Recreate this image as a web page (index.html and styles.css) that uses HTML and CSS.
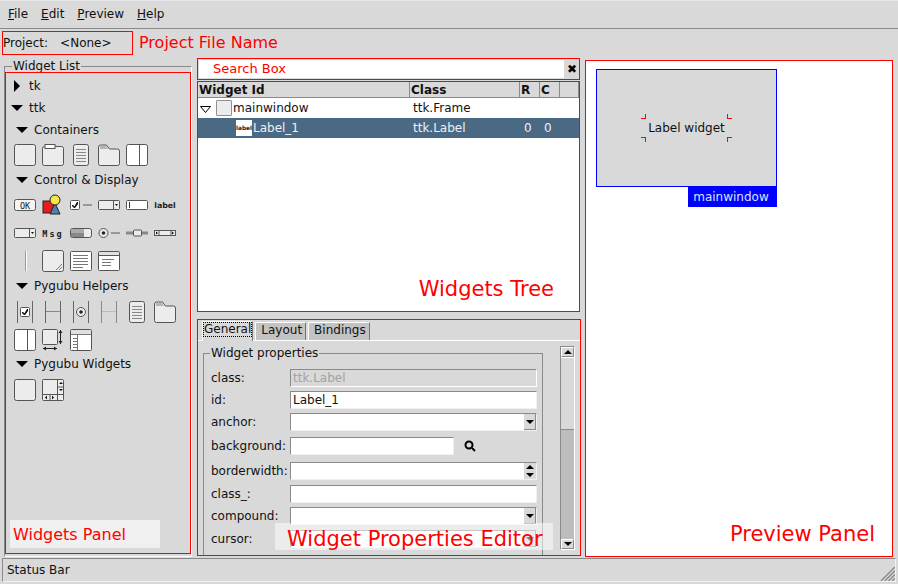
FILE: index.html
```html
<!DOCTYPE html>
<html lang="en">
<head>
    <meta charset="UTF-8">
    <meta name="viewport" content="width=device-width, initial-scale=1.0">
    <title>Pygubu Designer</title>
    <link rel="stylesheet" href="styles.css">
</head>
<body>
    <svg class="sprites" width="0" height="0">
        <symbol id="i-frame" viewBox="0 0 22 22"><rect x=".5" y=".5" width="21" height="21" rx="2" fill="#ececec" stroke="#555"/></symbol>
        <symbol id="i-labelframe" viewBox="0 0 22 22"><rect x=".5" y="2.500" width="21" height="19" rx="2" fill="#ececec" stroke="#555"/><rect x="3" y=".5" width="10" height="4" fill="#fff" stroke="#555"/></symbol>
        <symbol id="i-text" viewBox="0 0 22 22"><rect x="3.500" y=".5" width="15" height="21" rx="2" fill="#ececec" stroke="#555"/><path d="M6 5.500h10M6 8.500h10M6 11.500h10M6 14.500h10M6 17.500h10" stroke="#888"/></symbol>
        <symbol id="i-notebook" viewBox="0 0 22 22"><path d="M.5 3a2 2 0 0 1 2-2h6l3 4h8a2 2 0 0 1 2 2v12.500a2 2 0 0 1-2 2h-17a2 2 0 0 1-2-2z" fill="#ececec" stroke="#555"/><path d="M2 2h6l2 3H2z" fill="#b5b5b5"/></symbol>
        <symbol id="i-paned" viewBox="0 0 22 22"><rect x=".5" y=".5" width="21" height="21" rx="2" fill="#fff" stroke="#555"/><path d="M13.500 1v20" stroke="#555"/></symbol>
        <symbol id="i-image" viewBox="0 0 22 22"><rect x="1" y="7" width="12" height="12" fill="#e81c1c" stroke="#222"/><path d="M8 20l5-11 5 11z" fill="#4f7fae" stroke="#222"/><circle cx="13" cy="6" r="5" fill="#f5e64a" stroke="#222"/></symbol>
        <symbol id="i-check" viewBox="0 0 22 22"><rect x=".5" y="6.500" width="9" height="9" rx="1" fill="#fff" stroke="#555"/><path d="M2.500 11l2 2 3-5v2l-3 4-2-2z" fill="#111" stroke="#111"/><path d="M13 11h9" stroke="#999" stroke-width="2"/></symbol>
        <symbol id="i-combo" viewBox="0 0 22 22"><rect x=".5" y="6.500" width="21" height="9" rx="1" fill="#ececec" stroke="#555"/><path d="M15.500 7v8" stroke="#555"/><path d="M17 10h3l-1.500 2z" fill="#111"/></symbol>
        <symbol id="i-entry" viewBox="0 0 22 22"><rect x=".5" y="6.500" width="21" height="9" rx="1" fill="#fff" stroke="#555"/><path d="M3.500 8v6" stroke="#333"/></symbol>
        <symbol id="i-progress" viewBox="0 0 22 22"><rect x=".5" y="6.500" width="21" height="9" rx="2" fill="#ececec" stroke="#555"/><rect x="1" y="7" width="13" height="4" fill="#aaa"/><rect x="1" y="11" width="13" height="4" fill="#888"/></symbol>
        <symbol id="i-radio" viewBox="0 0 22 22"><circle cx="5.500" cy="11" r="4.500" fill="#ececec" stroke="#555"/><circle cx="5.500" cy="11" r="1.800" fill="#222"/><path d="M13 11h9" stroke="#999" stroke-width="2"/></symbol>
        <symbol id="i-scale" viewBox="0 0 22 22"><path d="M0 11h22" stroke="#888" stroke-width="3"/><rect x="7.500" y="8" width="8" height="6" rx="1" fill="#ececec" stroke="#555"/></symbol>
        <symbol id="i-scroll" viewBox="0 0 22 22"><rect x=".5" y="8.500" width="21" height="5" fill="#ececec" stroke="#555"/><path d="M5 9v4M17 9v4" stroke="#555"/><path d="M4 11l-2-1.500v3zM18 9.500v3l2-1.500z" fill="#111"/></symbol>
        <symbol id="i-sep" viewBox="0 0 22 22"><path d="M11.500 1v20" stroke="#999"/><path d="M12.500 1v20" stroke="#fff"/></symbol>
        <symbol id="i-grip" viewBox="0 0 22 22"><rect x=".5" y=".5" width="21" height="21" rx="2" fill="#ececec" stroke="#555"/><path d="M14 20l6-6M17 20l3-3" stroke="#777"/></symbol>
        <symbol id="i-textbox" viewBox="0 0 22 22"><rect x=".5" y="1.500" width="21" height="19" rx="1" fill="#fff" stroke="#555"/><path d="M3 5.500h15M3 8.500h15M3 11.500h15M3 14.500h15M3 17.500h10" stroke="#777"/></symbol>
        <symbol id="i-tree" viewBox="0 0 22 22"><rect x=".5" y="1.500" width="21" height="19" rx="1" fill="#fff" stroke="#555"/><rect x="1" y="2" width="20" height="3" fill="#e0e0e0"/><path d="M1 5.500h20" stroke="#555"/><path d="M4 9.500h12M4 12.500h9M4 15.500h9" stroke="#777"/></symbol>
        <symbol id="i-hcheck" viewBox="0 0 22 22"><path d="M3.500 0v22M18.500 0v22" stroke="#666"/><rect x="6.500" y="6.500" width="9" height="9" rx="1" fill="#fff" stroke="#555"/><path d="M8.500 11l2 2 3-5v2l-3 4-2-2z" fill="#111" stroke="#111"/></symbol>
        <symbol id="i-hline" viewBox="0 0 22 22"><path d="M3.500 0v22M18.500 0v22" stroke="#666"/><path d="M4 10.500h14" stroke="#888"/></symbol>
        <symbol id="i-hradio" viewBox="0 0 22 22"><path d="M3.500 0v22M18.500 0v22" stroke="#666"/><circle cx="11" cy="11" r="4.500" fill="#ececec" stroke="#555"/><circle cx="11" cy="11" r="1.800" fill="#222"/></symbol>
        <symbol id="i-hlight" viewBox="0 0 22 22"><path d="M3.500 0v22M18.500 0v22" stroke="#888"/><path d="M4 10.500h14" stroke="#bbb"/></symbol>
        <symbol id="i-scrolled" viewBox="0 0 22 22"><rect x=".5" y=".5" width="15" height="15" rx="1" fill="#ececec" stroke="#555"/><path d="M18.500 1v14" stroke="#222"/><path d="M18.500 1l-2 3h4zM18.500 15l-2-3h4z" fill="#222"/><path d="M1 19.500h14" stroke="#222"/><path d="M1 19.500l3-2v4zM15 19.500l-3-2v4z" fill="#222"/></symbol>
        <symbol id="i-stree" viewBox="0 0 22 22"><rect x=".5" y=".5" width="21" height="21" rx="1" fill="#fff" stroke="#555"/><rect x="1" y="1" width="20" height="4" fill="#e0e0e0"/><path d="M1 5.500h20M7 9.500H3M7 12.500H3M7 15.500H3M7 18.500H3" stroke="#777"/><path d="M7.500 6v15" stroke="#777"/></symbol>
        <symbol id="i-sframe" viewBox="0 0 22 22"><rect x=".5" y=".5" width="21" height="21" rx="1" fill="#ececec" stroke="#555"/><path d="M15.500 1v20M1 15.500h20" stroke="#555"/><path d="M19 3l-2 2h4zM19 12l-2-2h4zM3 18.500l2-2v4zM12 18.500l-2-2v4z" fill="#111"/><path d="M15.500 8h6M8 15.500v6" stroke="#555"/></symbol>
    </svg>

    <div class="app">
        <nav class="menubar">
            <span><u>F</u>ile</span>
            <span><u>E</u>dit</span>
            <span><u>P</u>review</span>
            <span><u>H</u>elp</span>
        </nav>

        <div class="projectbar">
            <div class="project-box"><span>Project:</span><span>&lt;None&gt;</span></div>
            <span class="tag project-tag">Project File Name</span>
        </div>

        <main class="main">
            <fieldset class="widget-list">
                <legend>Widget List</legend>
                <div class="widgets-panel">
                    <div class="group-head head-top"><i class="tri-right"></i>tk</div>
                    <div class="group-head head-top"><i class="tri-down"></i>ttk</div>

                    <div class="group-head"><i class="tri-down"></i>Containers</div>
                    <div class="icon-grid">
                        <svg class="icon"><use href="#i-frame"/></svg>
                        <svg class="icon"><use href="#i-labelframe"/></svg>
                        <svg class="icon"><use href="#i-text"/></svg>
                        <svg class="icon"><use href="#i-notebook"/></svg>
                        <svg class="icon"><use href="#i-paned"/></svg>
                    </div>

                    <div class="group-head"><i class="tri-down"></i>Control &amp; Display</div>
                    <div class="icon-grid">
                        <svg class="icon" viewBox="0 0 22 22"><rect x=".5" y="5.500" width="21" height="11" rx="2" fill="#f4f4f4" stroke="#555"/><text x="11" y="14.500" class="tiny-text" text-anchor="middle">OK</text></svg>
                        <svg class="icon"><use href="#i-image"/></svg>
                        <svg class="icon"><use href="#i-check"/></svg>
                        <svg class="icon"><use href="#i-combo"/></svg>
                        <svg class="icon"><use href="#i-entry"/></svg>
                        <svg class="icon" viewBox="0 0 22 22"><text x="11" y="14" class="tiny-text sans" text-anchor="middle">label</text></svg>
                        <svg class="icon"><use href="#i-combo"/></svg>
                        <svg class="icon" viewBox="0 0 22 22"><text x="11" y="14.500" class="tiny-text bold wide" text-anchor="middle">Msg</text></svg>
                        <svg class="icon"><use href="#i-progress"/></svg>
                        <svg class="icon"><use href="#i-radio"/></svg>
                        <svg class="icon"><use href="#i-scale"/></svg>
                        <svg class="icon"><use href="#i-scroll"/></svg>
                        <svg class="icon"><use href="#i-sep"/></svg>
                        <svg class="icon"><use href="#i-grip"/></svg>
                        <svg class="icon"><use href="#i-textbox"/></svg>
                        <svg class="icon"><use href="#i-tree"/></svg>
                    </div>

                    <div class="group-head"><i class="tri-down"></i>Pygubu Helpers</div>
                    <div class="icon-grid grid-low">
                        <svg class="icon"><use href="#i-hcheck"/></svg>
                        <svg class="icon"><use href="#i-hline"/></svg>
                        <svg class="icon"><use href="#i-hradio"/></svg>
                        <svg class="icon"><use href="#i-hlight"/></svg>
                        <svg class="icon"><use href="#i-text"/></svg>
                        <svg class="icon"><use href="#i-notebook"/></svg>
                        <svg class="icon"><use href="#i-paned"/></svg>
                        <svg class="icon"><use href="#i-scrolled"/></svg>
                        <svg class="icon"><use href="#i-stree"/></svg>
                    </div>

                    <div class="group-head"><i class="tri-down"></i>Pygubu Widgets</div>
                    <div class="icon-grid grid-low">
                        <svg class="icon"><use href="#i-frame"/></svg>
                        <svg class="icon"><use href="#i-sframe"/></svg>
                    </div>

                    <span class="tag tag-box panel-tag">Widgets Panel</span>
                </div>
            </fieldset>

            <section class="middle">
                <div class="search-panel">
                    <div class="search-entry">Search Box</div>
                    <span class="search-clear">✖</span>
                </div>

                <div class="tree-panel">
                    <div class="tree-head">
                        <span>Widget Id</span>
                        <span>Class</span>
                        <span>R</span>
                        <span>C</span>
                        <span></span>
                    </div>
                    <div class="tree-row">
                        <span class="tree-name"><svg class="tree-open" viewBox="0 0 11 7"><path d="M.5.5h10l-5 6z" fill="#fff" stroke="#000"/></svg><svg class="row-icon"><use href="#i-frame"/></svg>mainwindow</span>
                        <span class="tree-class">ttk.Frame</span>
                        <span></span>
                        <span></span>
                    </div>
                    <div class="tree-row selected">
                        <span class="tree-name child"><b class="label-chip">label</b>Label_1</span>
                        <span class="tree-class">ttk.Label</span>
                        <span class="tree-num">0</span>
                        <span class="tree-num">0</span>
                    </div>
                    <span class="tag tree-tag">Widgets Tree</span>
                </div>

                <div class="props-panel">
                    <div class="tabs">
                        <div class="tab active"><span class="tab-focus">General</span></div>
                        <div class="tab">Layout</div>
                        <div class="tab">Bindings</div>
                    </div>
                    <div class="tab-body">
                        <fieldset class="prop-frame">
                            <legend>Widget properties</legend>
                            <div class="prop-row"><label>class:</label><div class="field readonly">ttk.Label</div></div>
                            <div class="prop-row"><label>id:</label><div class="field">Label_1</div></div>
                            <div class="prop-row"><label>anchor:</label><div class="field"><i class="field-btn"><i class="tri-small"></i></i></div></div>
                            <div class="prop-row gap-2"><label>background:</label><div class="field field-short"></div>
                                <svg class="search-icon" viewBox="0 0 12 12"><circle cx="5" cy="5" r="3.500" fill="none" stroke="#000" stroke-width="2"/><path d="M8 8l3 3" stroke="#000" stroke-width="2"/></svg>
                            </div>
                            <div class="prop-row gap-3"><label>borderwidth:</label><div class="field"><i class="spin-btn"><i class="tri-small up"></i><i class="tri-small"></i></i></div></div>
                            <div class="prop-row gap-1"><label>class_:</label><div class="field"></div></div>
                            <div class="prop-row"><label>compound:</label><div class="field"><i class="field-btn"><i class="tri-small"></i></i></div></div>
                            <div class="prop-row gap-1"><label>cursor:</label><div class="field"><i class="field-btn"><i class="tri-small"></i></i></div></div>
                        </fieldset>
                        <div class="scrollbar">
                            <div class="scroll-btn"><i class="tri-small up"></i></div>
                            <div class="scroll-thumb"></div>
                            <div class="scroll-trough"></div>
                            <div class="scroll-btn"><i class="tri-small"></i></div>
                        </div>
                    </div>
                    <span class="tag tag-box props-tag">Widget Properties Editor</span>
                </div>
            </section>

            <section class="preview-panel">
                <div class="preview-window">
                    <div class="preview-canvas">
                        <span class="preview-label">Label widget
                            <i class="handle tl"></i><i class="handle tr"></i><i class="handle bl"></i><i class="handle br"></i>
                        </span>
                    </div>
                    <div class="preview-name">mainwindow</div>
                </div>
                <span class="tag preview-tag">Preview Panel</span>
            </section>
        </main>

        <footer class="statusbar">
            <span>Status Bar</span>
            <svg class="resize-grip" viewBox="0 0 16 16"><path d="M1 16L16 1M5 16L16 5M9 16l7-7M13 16l3-3" stroke="#8a8a8a" stroke-width="1.500"/></svg>
        </footer>
    </div>
</body>
</html>
```

FILE: styles.css
```css
* {
    box-sizing: border-box;
}

html, body {
    margin: 0;
    height: 100%;
    overflow: hidden;
}

body {
    font-family: "DejaVu Sans", sans-serif;
    font-size: 12px;
    color: #111;
    background: #d9d9d9;
}

.sprites {
    position: absolute;
}

.tiny-text {
    font-family: "DejaVu Sans Mono", monospace;
    font-size: 8.5px;
    fill: #222;
}

.tiny-text.bold {
    font-weight: bold;
}

.tiny-text.wide {
    letter-spacing: 2px;
}

.tiny-text.sans {
    font-family: "DejaVu Sans", sans-serif;
    font-size: 7.8px;
    font-weight: bold;
}

.app {
    display: flex;
    flex-direction: column;
    height: 584px;
}

.menubar {
    display: flex;
    gap: 13px;
    align-items: center;
    height: 29px;
    padding: 0 8px 1px;
    border-top: 1px solid #e6e6e6;
    border-bottom: 1px solid #8a8a8a;
}

.projectbar {
    display: flex;
    align-items: center;
    height: 27px;
    padding: 1px 0 0 2px;
}

.project-box {
    display: flex;
    gap: 12px;
    align-items: center;
    width: 131px;
    height: 24px;
    border: 1px solid #f00;
}

.tag {
    position: absolute;
    color: #f00;
    font-size: 20px;
    line-height: 24px;
    white-space: nowrap;
}

.project-tag {
    position: static;
    margin-left: 6px;
    font-size: 16px;
}

.tag-box {
    background: rgba(255, 255, 255, 0.6);
}

.main {
    display: flex;
    flex: 1;
    min-height: 0;
    padding-left: 4px;
}

/* widget list */
.widget-list {
    width: 188px;
    height: 497px;
    margin: 4px 0 0;
    padding: 0;
    border: 1px solid #fff;
    border-top-color: #8a8a8a;
    border-left-color: #8a8a8a;
}

.widget-list legend {
    margin-left: 7px;
    padding: 0 1px;
    line-height: 12px;
}

.widgets-panel {
    position: relative;
    width: 186px;
    height: 482px;
    padding-top: 2px;
    border: 1px solid #f00;
}

.group-head {
    display: flex;
    align-items: center;
    gap: 6px;
    height: 22px;
    padding-left: 10px;
}

.head-top {
    padding-left: 5px;
}

.tri-right, .tri-down, .tri-small {
    display: block;
    width: 0;
    height: 0;
    border-style: solid;
    border-color: transparent;
}

.tri-right {
    margin: 0 3px;
    border-width: 6px 0 6px 6px;
    border-left-color: #000;
}

.tri-down {
    border-width: 6px 6px 0;
    border-top-color: #000;
}

.tri-small {
    border-width: 4px 4px 0;
    border-top-color: #000;
}

.tri-small.up {
    border-width: 0 4px 4px;
    border-bottom-color: #000;
}

.icon-grid {
    display: grid;
    grid-template-columns: repeat(6, 22px);
    gap: 6px;
    margin: 3px 0;
    padding-left: 8px;
}

.grid-low {
    margin: 4px 0 2px;
}

.icon {
    display: block;
    width: 22px;
    height: 22px;
}

.panel-tag {
    left: 4px;
    top: 447px;
    width: 150px;
    height: 28px;
    padding-left: 3px;
    font-size: 16px;
    line-height: 30px;
}

/* middle column */
.middle {
    display: flex;
    flex-direction: column;
    width: 383px;
    margin-left: 5px;
    padding-top: 2px;
}

.search-panel {
    display: flex;
    align-items: center;
    height: 22px;
    margin-bottom: 1px;
    border: 1px solid #f00;
}

.search-entry {
    width: 367px;
    height: 18px;
    margin-left: 1px;
    padding-left: 14px;
    background: #fff;
    color: #f00;
    font-size: 13px;
    line-height: 18px;
}

.search-clear {
    width: 14px;
    margin-left: 1px;
    color: #000;
    font-size: 12px;
    text-align: center;
}

.tree-panel {
    position: relative;
    height: 231px;
    margin-bottom: 7px;
    background: #fff;
    border: 1px solid #f00;
}

.tree-head, .tree-row {
    display: grid;
    grid-template-columns: 212px 110px 20px 20px 1fr;
}

.tree-head {
    height: 16px;
    background: #d9d9d9;
    font-weight: bold;
    line-height: 16px;
}

.tree-head span {
    padding-left: 1px;
    border-right: 1px solid #8a8a8a;
    border-bottom: 1px solid #8a8a8a;
    white-space: nowrap;
    overflow: hidden;
}

.tree-row {
    height: 20px;
    padding-bottom: 1px;
    align-items: center;
}

.tree-name {
    display: flex;
    align-items: center;
}

.tree-open {
    width: 11px;
    height: 7px;
    margin: 3px 5px 0 2px;
}

.row-icon {
    width: 16px;
    height: 16px;
    margin-right: 1px;
}

.tree-class {
    padding-left: 3px;
}

.tree-num {
    padding-left: 4px;
}

.selected {
    background: #4a6984;
    color: #eef2f5;
}

.child {
    padding-left: 38px;
}

.label-chip {
    width: 16px;
    height: 16px;
    margin-right: 1px;
    background: #fff;
    color: #222;
    font-size: 5.800px;
    line-height: 16px;
    text-align: center;
}

.tree-tag {
    right: 25px;
    bottom: 10px;
    font-size: 21px;
}

/* properties */
.props-panel {
    position: relative;
    width: 384px;
    height: 237px;
    border: 1px solid #f00;
    overflow: hidden;
}

.tabs {
    display: flex;
    gap: 2px;
    align-items: flex-end;
    height: 20px;
    padding-left: 4px;
}

.tab {
    height: 18px;
    padding: 0 3px 0 5px;
    background: #c3c3c3;
    border: 1px solid #fff;
    border-right-color: #777;
    border-bottom: 0;
    line-height: 15px;
}

.tab.active {
    position: relative;
    z-index: 1;
    height: 20px;
    margin-bottom: -1px;
    padding: 0;
    background: #d9d9d9;
}

.tab-focus {
    display: block;
    border: 1px dotted #000;
    line-height: 13px;
}

.tab-body {
    display: flex;
    height: 215px;
    padding-left: 5px;
    border-top: 1px solid #fff;
}

.prop-frame {
    width: 340px;
    height: 210px;
    margin: 6px 0 0;
    padding: 8px 5px 0 7px;
    border: 1px solid #8a8a8a;
    border-bottom: 0;
}

.prop-frame legend {
    margin-left: -1px;
    padding: 0 1px;
    line-height: 12px;
}

.prop-row {
    display: flex;
    align-items: center;
    height: 22px;
}

.gap-1 {
    margin-top: 1px;
}

.gap-2 {
    margin-top: 2px;
}

.gap-3 {
    margin-top: 3px;
}

.prop-row label {
    width: 79px;
    flex: none;
    white-space: nowrap;
}

.field {
    position: relative;
    flex: 1;
    height: 18px;
    padding-left: 2px;
    background: #fff;
    border: 1px solid #f0f0f0;
    border-top-color: #8a8a8a;
    border-left-color: #8a8a8a;
    line-height: 16px;
}

.readonly {
    background: #d9d9d9;
    color: #a3a3a3;
    border-color: #8a8a8a #fff #fff #8a8a8a;
}

.field-short {
    flex: none;
    width: 164px;
}

.field-btn {
    position: absolute;
    top: 0;
    right: 0;
    display: flex;
    align-items: center;
    justify-content: center;
    width: 12px;
    height: 16px;
    background: #d9d9d9;
    border-right: 1px solid #8a8a8a;
    border-bottom: 1px solid #8a8a8a;
}

.spin-btn {
    position: absolute;
    top: 0;
    right: 0;
    display: flex;
    flex-direction: column;
    align-items: center;
    justify-content: space-around;
    width: 12px;
    height: 16px;
    background: #d9d9d9;
}

.search-icon {
    width: 12px;
    height: 12px;
    margin-left: 10px;
}

.scrollbar {
    display: flex;
    flex-direction: column;
    width: 15px;
    height: 204px;
    margin: 5px 0 0 17px;
    background: #bdbdbd;
    border: 1px solid #fff;
    border-top-color: #8a8a8a;
    border-left-color: #8a8a8a;
}

.scroll-btn {
    display: flex;
    align-items: center;
    justify-content: center;
    height: 10px;
    flex: none;
    background: #d9d9d9;
    border: 1px solid #fff;
    border-right-color: #8a8a8a;
    border-bottom-color: #8a8a8a;
}

.scroll-thumb {
    flex: none;
    height: 73px;
    background: #d9d9d9;
    border-top: 1px solid #fff;
    border-bottom: 1px solid #8a8a8a;
}

.scroll-trough {
    flex: 1;
}

.props-tag {
    left: 77px;
    top: 203px;
    width: 278px;
    height: 27px;
    padding-left: 12px;
    font-size: 21px;
    line-height: 32px;
    background: rgba(255, 255, 255, 0.5);
}

/* preview */
.preview-panel {
    position: relative;
    width: 308px;
    height: 497px;
    margin: 4px 0 0 5px;
    padding: 8px 10px;
    background: #fff;
    border: 1px solid #f00;
}

.preview-window {
    display: flex;
    flex-direction: column;
    align-items: flex-end;
    width: 181px;
}

.preview-canvas {
    display: flex;
    align-items: center;
    justify-content: center;
    width: 181px;
    height: 118px;
    background: #d9d9d9;
    border: 1px solid #00f;
}

.preview-label {
    position: relative;
    width: 81px;
    height: 18px;
    line-height: 18px;
    text-align: center;
    white-space: nowrap;
}

.handle {
    position: absolute;
    width: 5px;
    height: 5px;
    border: 0 solid #f00;
}

.handle.tl {
    left: -5px;
    top: -5px;
    border-right-width: 1px;
    border-bottom-width: 1px;
}

.handle.tr {
    right: -5px;
    top: -5px;
    border-left-width: 1px;
    border-bottom-width: 1px;
}

.handle.bl {
    left: -5px;
    bottom: -5px;
    border-right-width: 1px;
    border-top-width: 1px;
}

.handle.br {
    right: -5px;
    bottom: -5px;
    border-left-width: 1px;
    border-top-width: 1px;
}

.preview-name {
    width: 89px;
    height: 20px;
    padding-right: 3px;
    background: #00f;
    color: #d8e4ff;
    line-height: 20px;
    text-align: center;
}

.preview-tag {
    right: 17px;
    bottom: 10px;
    font-size: 21px;
}

/* status bar */
.statusbar {
    display: flex;
    align-items: center;
    justify-content: space-between;
    height: 24px;
    margin: 1px 2px 2px;
    padding-left: 4px;
    border: 1px solid #f2f2f2;
    border-top-color: #8a8a8a;
    border-left-color: #8a8a8a;
}

.resize-grip {
    width: 15px;
    height: 15px;
    align-self: flex-end;
}
```
